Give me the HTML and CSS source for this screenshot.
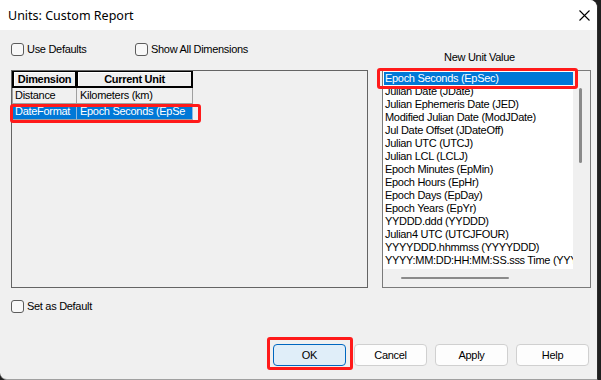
FILE: index.html
```html
<!DOCTYPE html>
<html>
<head>
<meta charset="utf-8">
<link rel="stylesheet" href="styles.css">
</head>
<body>
<div class="window">
  <div class="titlebar">
    <span class="title">Units: Custom Report</span>
    <svg class="close" width="11" height="11" viewBox="0 0 11 11"><path d="M0.5 0.5 L10.5 10.5 M10.5 0.5 L0.5 10.5" stroke="#000" stroke-width="1.1" fill="none"/></svg>
  </div>
  <div class="body">
    <div class="cols">
      <div class="left">
        <div class="checks">
          <div class="check first"><span class="cb"></span><span>Use Defaults</span></div>
          <div class="check"><span class="cb"></span><span>Show All Dimensions</span></div>
        </div>
        <div class="panel">
          <div class="grid">
            <div class="hcell">Dimension</div>
            <div class="hcell">Current Unit</div>
            <div class="cell">Distance</div>
            <div class="cell">Kilometers (km)</div>
            <div class="cell sel">DateFormat</div>
            <div class="cell sel">Epoch Seconds (EpSe</div>
          </div>
        </div>
      </div>
      <div class="right">
        <div class="label">New Unit Value</div>
        <div class="listbox">
          <div class="items">
            <div class="item sel">Epoch Seconds (EpSec)</div>
            <div class="item">Julian Date (JDate)</div>
            <div class="item">Julian Ephemeris Date (JED)</div>
            <div class="item">Modified Julian Date (ModJDate)</div>
            <div class="item">Jul Date Offset (JDateOff)</div>
            <div class="item">Julian UTC (UTCJ)</div>
            <div class="item">Julian LCL (LCLJ)</div>
            <div class="item">Epoch Minutes (EpMin)</div>
            <div class="item">Epoch Hours (EpHr)</div>
            <div class="item">Epoch Days (EpDay)</div>
            <div class="item">Epoch Years (EpYr)</div>
            <div class="item">YYDDD.ddd (YYDDD)</div>
            <div class="item">Julian4 UTC (UTCJFOUR)</div>
            <div class="item">YYYYDDD.hhmmss (YYYYDDD)</div>
            <div class="item">YYYY:MM:DD:HH:MM:SS.sss Time (YYYY:MM:DD:HH:MM:SS.sss)</div>
          </div>
          <div class="vscroll"><div class="vthumb"></div></div>
          <div class="hscroll"><div class="hthumb"></div></div>
          <div class="corner"></div>
        </div>
      </div>
    </div>
    <div class="check setdef"><span class="cb"></span><span>Set as Default</span></div>
    <div class="buttons">
      <div class="btn default">OK</div>
      <div class="btn">Cancel</div>
      <div class="btn">Apply</div>
      <div class="btn">Help</div>
    </div>
  </div>
  <div class="mark mark-row"></div>
  <div class="mark mark-item"></div>
  <div class="mark mark-ok"></div>
</div>
</body>
</html>
```

FILE: styles.css
```css
html, body {
  margin: 0;
  padding: 0;
}
body {
  background: #1f1f1f;
  width: 601px;
  height: 380px;
  overflow: hidden;
}
.window {
  position: relative;
  width: 597px;
  height: 379px;
  background: #f0f0f0;
  border-right: 1px solid #2b2b2b;
  border-bottom: 1px solid #a0a0a0;
  border-top-right-radius: 8px;
  border-bottom-left-radius: 7px;
  display: flex;
  flex-direction: column;
  overflow: hidden;
  font-family: "Liberation Sans", Arial, sans-serif;
  font-size: 11px;
  letter-spacing: -0.3px;
  color: #000;
}
.titlebar {
  height: 30px;
  flex: none;
  background: #fff;
  display: flex;
  align-items: center;
  justify-content: space-between;
  padding: 0 7px 0 8px;
}
.title {
  font-family: "Noto Sans", sans-serif;
  font-size: 12.5px;
  letter-spacing: 0;
  margin-top: 1px;
}
.body {
  flex: 1;
  display: flex;
  flex-direction: column;
  padding-left: 11px;
}
.cols {
  display: flex;
  gap: 14px;
}
.left {
  width: 357px;
  display: flex;
  flex-direction: column;
}
.checks {
  display: flex;
  margin-top: 13px;
  height: 13px;
}
.check {
  display: flex;
  align-items: center;
  gap: 3px;
  height: 13px;
  line-height: 13px;
}
.check.first {
  width: 124px;
}
.cb {
  width: 11px;
  height: 11px;
  border: 1px solid #5c5c5c;
  border-radius: 3px;
  background: #f8f8f8;
  flex: none;
}
.panel {
  margin-top: 14px;
  height: 218px;
  box-sizing: border-box;
  border: 1px solid #646464;
}
.grid {
  display: grid;
  grid-template-columns: 65px 116px;
  grid-template-rows: 17px 16px 16px;
}
.hcell {
  box-sizing: border-box;
  border-style: solid;
  border-color: #000;
  border-width: 1px 2px 2px 2px;
  box-shadow: inset 1px 1px 0 #fff;
  font-weight: bold;
  text-align: center;
  line-height: 14px;
  white-space: nowrap;
  overflow: hidden;
}
.hcell + .hcell {
  border-left-width: 1px;
}
.cell {
  box-sizing: border-box;
  border-right: 1px solid #a0a0a0;
  border-bottom: 1px solid #a0a0a0;
  padding-left: 3px;
  line-height: 15px;
  white-space: nowrap;
  overflow: hidden;
}
.cell:nth-child(odd) {
  border-left: 1px solid #a0a0a0;
  padding-left: 2px;
}
.cell.sel {
  background: #0078d7;
  color: #fff;
  border-right-color: #8fb8e0;
}
.right {
  width: 209px;
  display: flex;
  flex-direction: column;
}
.label {
  margin-top: 21px;
  line-height: 13px;
  height: 13px;
  text-align: center;
  padding-right: 14px;
}
.listbox {
  margin-top: 6px;
  height: 218px;
  box-sizing: border-box;
  border: 1px solid #7a7a7a;
  display: grid;
  grid-template-columns: 190px 17px;
  grid-template-rows: 198px 18px;
}
.items {
  background: #fff;
  padding-top: 1px;
  overflow: hidden;
}
.item {
  line-height: 13px;
  height: 13px;
  padding-left: 2px;
  white-space: nowrap;
  overflow: hidden;
}
.item.sel {
  background: #0078d7;
  color: #fff;
  margin-left: 1px;
  padding-left: 1px;
}
.vscroll {
  background: #f0f0f0;
  padding-top: 17px;
}
.vthumb {
  width: 3px;
  height: 75px;
  margin-left: 6px;
  background: #8a8a8a;
  border-radius: 1.5px;
}
.hscroll {
  background: #f0f0f0;
  padding-top: 8px;
}
.hthumb {
  width: 108px;
  height: 2px;
  margin-left: 18px;
  background: #8a8a8a;
  border-radius: 1px;
}
.corner {
  background: #f0f0f0;
}
.setdef {
  margin-top: 12px;
}
.buttons {
  display: flex;
  justify-content: flex-end;
  gap: 8px;
  padding-right: 8px;
  margin-top: 31px;
}
.btn {
  width: 73px;
  height: 22px;
  box-sizing: border-box;
  border: 1px solid #d0d0d0;
  border-radius: 4px;
  background: #fdfdfd;
  text-align: center;
  line-height: 20px;
}
.btn.default {
  background: #e0eef9;
  border-color: #0067c0;
}
.mark {
  position: absolute;
  box-sizing: border-box;
  border: 3px solid #ff1a1a;
  border-radius: 3px;
}
.mark-row {
  left: 10px;
  top: 104px;
  width: 191px;
  height: 19px;
}
.mark-item {
  left: 377px;
  top: 68px;
  width: 201px;
  height: 21px;
}
.mark-ok {
  left: 267px;
  top: 337px;
  width: 86px;
  height: 33px;
}
```
